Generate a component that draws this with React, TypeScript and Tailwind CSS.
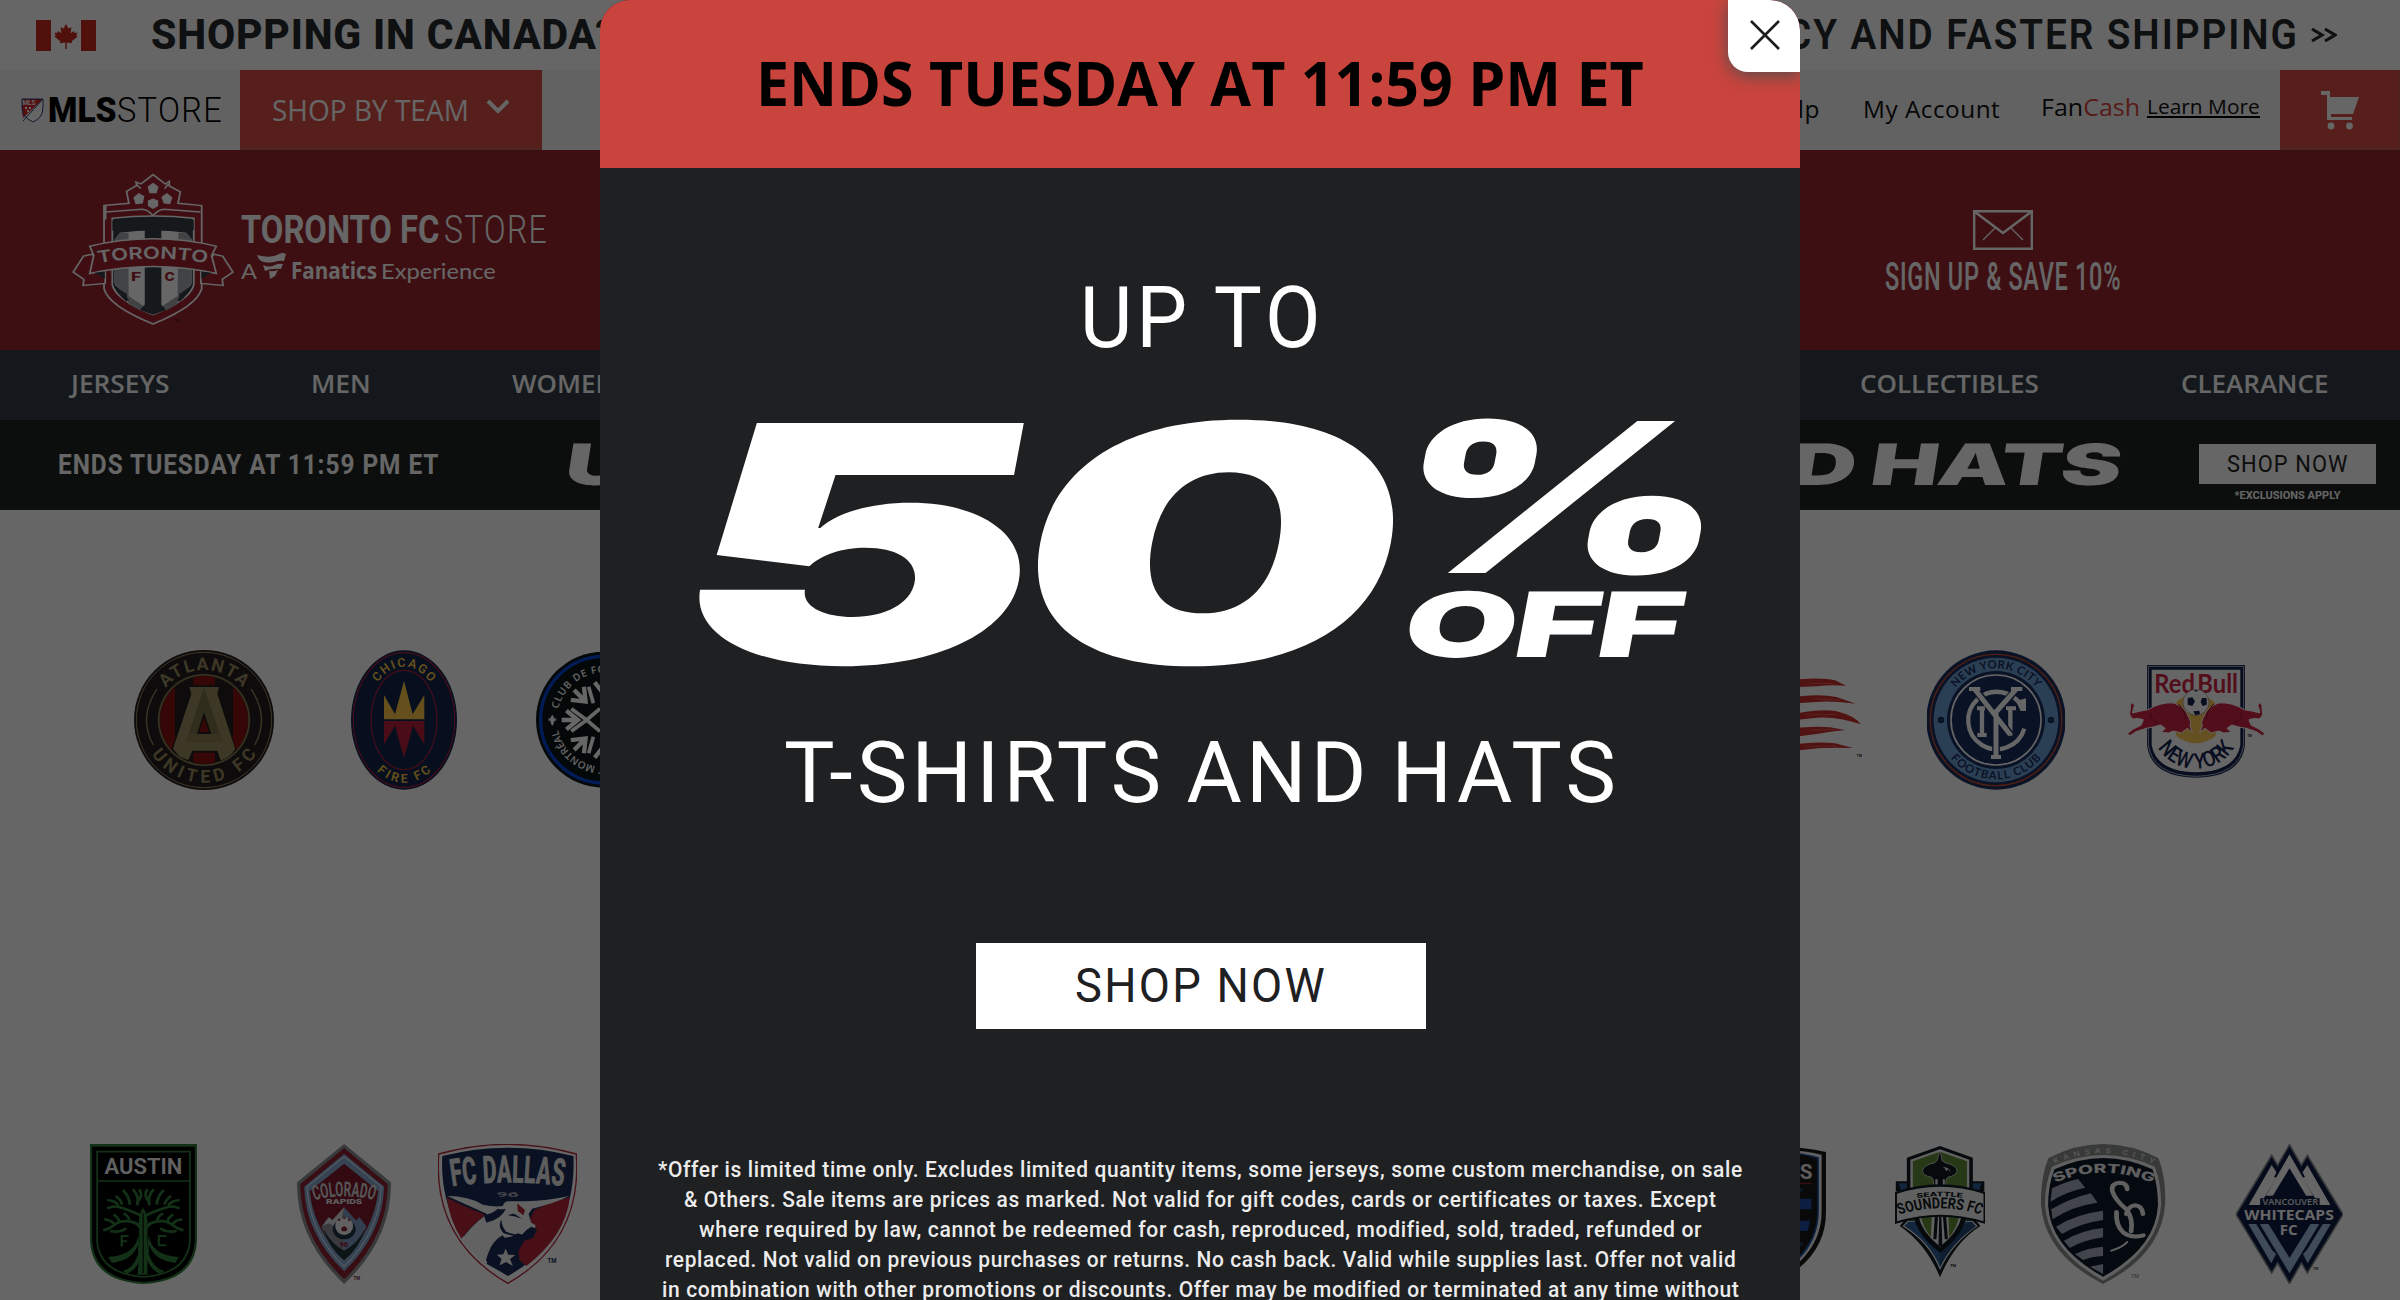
import React, { useLayoutEffect, useRef } from "react";

/* Single line of text stretched horizontally to the width of its box. */
function Fit({ className = "", slant = 0, children }: { className?: string; slant?: number; children: React.ReactNode }) {
  const outer = useRef<HTMLSpanElement>(null);
  const inner = useRef<HTMLSpanElement>(null);
  useLayoutEffect(() => {
    const o = outer.current;
    const i = inner.current;
    if (!o || !i) return;
    const k = o.clientWidth / i.offsetWidth;
    i.style.transform = `skewX(${-slant}deg) scaleX(${k})`;
  }, [slant]);
  return (
    <span ref={outer} className={"block shrink-0 whitespace-nowrap " + className}>
      <span ref={inner} className="inline-block origin-left">{children}</span>
    </span>
  );
}

type ArcProps = {
  id: string; cx: number; cy: number; rx: number; ry?: number; bottom?: boolean;
  size: number; fill: string; len: number; weight?: number; font?: string; stretch?: boolean; children: string;
};
function ArcText({ id, cx, cy, rx, ry = rx, bottom = false, size, fill, len, weight = 700, font = "Roboto", stretch = false, children }: ArcProps) {
  return (
    <>
      <path id={id} fill="none" d={`M${cx - rx} ${cy}A${rx} ${ry} 0 0 ${bottom ? 0 : 1} ${cx + rx} ${cy}`} />
      <text fontFamily={`${font}, sans-serif`} fontWeight={weight} fontSize={size} fill={fill} textAnchor="middle">
        <textPath href={"#" + id} startOffset="50%" textLength={len} lengthAdjust={stretch ? "spacingAndGlyphs" : "spacing"}>{children}</textPath>
      </text>
    </>
  );
}

type LabelProps = { x: number; y: number; size: number; w: number; fill: string; weight?: number; font?: string; transform?: string; children: string };
function Label({ x, y, size, w, fill, weight = 700, font = "Roboto", transform, children }: LabelProps) {
  return (
    <text x={x} y={y} textAnchor="middle" fontFamily={`${font}, sans-serif`} fontWeight={weight} fontSize={size} fill={fill} textLength={w} lengthAdjust="spacingAndGlyphs" transform={transform}>
      {children}
    </text>
  );
}

function Crest({ box, className, label, children }: { box: string; className: string; label: string; children: React.ReactNode }) {
  return (
    <svg viewBox={box} preserveAspectRatio="none" className={"block shrink-0 " + className} role="img" aria-label={label}>
      {children}
    </svg>
  );
}

function Atlanta() {
  const gold = "#988b5e";
  return (
    <Crest box="72 60 420 420" className="ml-[134px] h-[140px] w-[140px]" label="Atlanta United FC">
      <circle cx="282" cy="270" r="210" fill="#241d20" />
      <circle cx="282" cy="270" r="203" fill="none" stroke={gold} strokeWidth="3" />
      <clipPath id="atl"><circle cx="282" cy="270" r="132" /></clipPath>
      <circle cx="282" cy="270" r="139" fill="#625a3a" />
      <circle cx="282" cy="270" r="136" fill="none" stroke={gold} strokeWidth="3" />
      <g clipPath="url(#atl)">
        <rect x="140" y="130" width="290" height="280" fill="#241d20" />
        <path d="M140 130h55v280h-55zM250 130h65v35h-65zM250 368h65v40h-65zM369 130h60v280h-60z" fill="#8a0f0f" />
        <path d="M236 168h93l-5 24 56 172-18 24-33 10-13-34h-69l-11 34-30-8-22-30 60-170z" fill="#241d20" />
        <path d="M238 171h89l-5 21 54 166-19 22-24 12-11-30h-75l-12 28-26-10-20-24 55-164z" fill={gold} />
        <path d="M282 172l56 165H228z" fill="#7c7148" />
        <path d="M228 337h110l-12-26h-86z" fill={gold} opacity=".6" />
        <path d="M282 246l22 66h-43z" fill="#241d20" />
        <path d="M282 262l15 44h-29z" fill="#8a0f0f" />
      </g>
      <path d="M141 177Q84 262 130 345M423 177Q480 262 434 345" fill="none" stroke={gold} strokeWidth="4" />
      <ArcText id="atl-t" cx={282} cy={270} rx={150} size={53} fill={gold} len={262}>ATLANTA</ArcText>
      <ArcText id="atl-b" cx={282} cy={270} rx={188} bottom size={53} fill={gold} len={375}>UNITED FC</ArcText>
    </Crest>
  );
}

function Chicago() {
  return (
    <Crest box="723 60 318 420" className="ml-[77px] h-[140px] w-[106px]" label="Chicago Fire FC">
      <ellipse cx="882" cy="270" rx="159" ry="209" fill="#12264b" />
      <ellipse cx="882" cy="270" rx="152" ry="202" fill="none" stroke="#af2041" strokeWidth="3.5" />
      <ellipse cx="882" cy="270" rx="99" ry="149" fill="none" stroke="#af2041" strokeWidth="3.5" />
      <path d="M822 195l33 58 27-100 26 100 35-58v73H822z" fill="#fdc84a" />
      <path d="M822 273h121v70l-34-56-27 97-27-97-33 56z" fill="#b9213c" />
      <ArcText id="chi-t" cx={882} cy={270} rx={110} ry={160} size={37} fill="#fdc84a" len={190} weight={600}>CHICAGO</ArcText>
      <ArcText id="chi-b" cx={882} cy={270} rx={140} ry={188} bottom size={37} fill="#fdc84a" len={182} weight={600}>FIRE FC</ArcText>
    </Crest>
  );
}

function Montreal() {
  return (
    <Crest box="1278 60 408 420" className="ml-[79px] h-[140px] w-[136px]" label="CF Montréal">
      <circle cx="1482" cy="269" r="204" fill="#0c1418" />
      <circle cx="1482" cy="269" r="190" fill="none" stroke="#0044d8" strokeWidth="10" />
      <g fill="none" stroke="#fff" strokeWidth="13">
        {[0, 45, 90, 135, 180, 225, 270, 315].map((a) => (
          <g key={a} transform={`rotate(${a} 1482 270)`}>
            <path d="M1355 270h48M1369 242l35 28-35 28" />
          </g>
        ))}
        <path d="M1384 236l46 34-46 34M1450 220l-14-50M1450 320l-14 50M1430 270l40-34M1430 270l40 34" strokeWidth="11" />
      </g>
      <path d="M1327 256q10 12 0 30q-10-18 0-30M1314 270h26M1317 264q4 10 10 10M1337 264q-4 10-10 10" fill="#fff" stroke="#fff" strokeWidth="3" />
      <path id="mtl" fill="none" d="M1341 269a141 141 0 1 1 0 .1" />
      <text fontFamily="Open Sans, sans-serif" fontWeight="600" fontSize="30" fill="#fff">
        <textPath href="#mtl" startOffset="32" textLength="262">CLUB DE FOOTB</textPath>
      </text>
      <text fontFamily="Open Sans, sans-serif" fontWeight="600" fontSize="30" fill="#fff">
        <textPath href="#mtl" startOffset="664" textLength="190">T MONTRÉAL</textPath>
      </text>
    </Crest>
  );
}

function NewEngland() {
  return (
    <Crest box="0 60 246 420" className="ml-[1108px] h-[140px] w-[82px]" label="New England Revolution">
      <g fill="#c9302e">
        <path d="M0 155Q110 138 165 151L199 167Q150 164 110 169L0 173z" />
        <path d="M0 207Q110 188 170 201L227 221Q150 212 110 216L0 223z" />
        <path d="M0 262Q110 232 170 244Q225 258 243 283Q170 258 110 263L0 275z" />
        <path d="M0 300Q100 286 150 292L195 300Q150 305 110 312L0 326z" />
        <path d="M0 348Q110 332 165 340L219 354Q140 352 100 356L0 367z" />
      </g>
      <g fill="none" stroke="#ff9d98" strokeWidth="2" opacity=".55">
        <path d="M90 160l70 1M100 205l80 6M80 255l90-2M90 300l80-2M80 350l90-3" />
      </g>
      <Label x={238} y={381} size={13} w={15} fill="#111827">TM</Label>
    </Crest>
  );
}

function NewYorkCity() {
  const navy = "#1a2d5e";
  return (
    <Crest box="441 60 414 420" className="ml-[65px] h-[140px] w-[138px]" label="New York City FC">
      <circle cx="648" cy="270" r="209" fill={navy} />
      <circle cx="648" cy="270" r="197" fill="none" stroke="#c9502e" strokeWidth="4" />
      <circle cx="648" cy="270" r="187" fill="#6a9fd0" />
      <circle cx="648" cy="270" r="147" fill={navy} />
      <circle cx="648" cy="270" r="135" fill="none" stroke="#fff" strokeWidth="5" />
      <path d="M727 232A86 86 0 1 0 733 296" fill="none" stroke="#fff" strokeWidth="13" />
      <path d="M738 205v38h-16l-14-30z" fill="#fff" />
      <g fill="none" stroke="#fff" strokeWidth="15">
        <path d="M606 233v84M691 233v84" strokeWidth="13" />
        <path d="M585 178l106 136M708 178l-60 72M648 240v142" stroke={navy} strokeWidth="23" />
        <path d="M583 176l108 138M708 178l-60 68M648 240v140" />
        <path d="M567 177h34M693 177h34M633 381h30M591 235h24M678 235h30M592 315h28" strokeWidth="12" />
      </g>
      <circle cx="483" cy="270" r="10" fill={navy} />
      <circle cx="813" cy="270" r="10" fill={navy} />
      <ArcText id="nyc-t" cx={648} cy={270} rx={155} size={34} fill={navy} len={278} weight={700} font="Lato">NEW YORK CITY</ArcText>
      <ArcText id="nyc-b" cx={648} cy={270} rx={178} bottom size={34} fill={navy} len={310} weight={700} font="Lato">FOOTBALL CLUB</ArcText>
    </Crest>
  );
}

function RedBull() {
  const red = "#cf2544";
  const bull = "M1052 217l12 8q-6 14-6 24q20-6 46-10q40-24 78-20q34 14 42 38q12 20 6 30l8 20-16-12-18 14-24-6-14 6-22-2 12-12-14-10q-26 8-44 10l-30 10-18 12-8-6 18-14 24-12 6-16q-16-6-30-2q-14-8-10-24q2-18 2-28z";
  return (
    <Crest box="1041 60 414 420" className="ml-[62px] h-[140px] w-[138px]" label="New York Red Bulls">
      <path d="M1101 105h294v240q-12 96-147 98q-135-2-147-98z" fill="#14244f" />
      <path d="M1105 109h286v235q-12 92-143 95q-131-3-143-95z" fill="none" stroke="#fff" strokeWidth="2" />
      <path d="M1115 119h266v226q-14 80-133 82q-119-2-133-82z" fill="#fff" />
      <path d="M1180 225q68-70 130 0l-4 60q10 30-8 40q-50 30-100 0q-18-10-8-40z" fill="#fbc750" />
      <Label x={1184} y={189} size={82} w={122} fill={red} font="Lato" weight={700}>Red</Label>
      <Label x={1313} y={189} size={82} w={122} fill={red} font="Lato" weight={700}>Bull</Label>
      <circle cx="1248" cy="217" r="39" fill="#fff" stroke="#777" strokeWidth="1.5" />
      <path d="M1223 204l14-2 8 12-8 14-14-4zM1266 204l14 0v20l-12 4-6-12zM1241 181h14l-7 5zM1240 244l18-2 2 10-14 4z" fill="#14244f" />
      <path d={bull} fill={red} stroke="#fff" strokeWidth="3" />
      <path d={bull} transform="translate(2497 0) scale(-1 1)" fill={red} stroke="#fff" strokeWidth="3" />
      <path d="M1196 222q20 20 22 46M1301 222q-20 20-22 46M1110 250q0 20 24 28M1387 250q0 20-24 28" fill="none" stroke="#8d1027" strokeWidth="3" />
      <ArcText id="rb-b" cx={1248} cy={290} rx={132} ry={126} bottom size={66} fill="#14244f" len={272} weight={500} stretch>NEW YORK</ArcText>
      <Label x={1409} y={322} size={10} w={13} fill="#111827">TM</Label>
    </Crest>
  );
}

function Austin() {
  const green = "#2f7a3a";
  const side = (
    <g fill="none" stroke={green} strokeWidth="8">
      <path d="M229 345q0-34-30-40q-30-6-50 12q-12 10-28 14M132 265q20-10 40-2q40 14 58 26M140 333q30 6 46-8M124 298q22 2 30 18M150 283q14 10 16 22M178 280q14 8 16 20M156 228q14 10 18 26M176 210q18 18 20 44M204 208q20 20 12 48M132 240q22 2 32 16M222 208q14 20-8 40" />
    </g>
  );
  return (
    <Crest box="84 72 300 420" className="ml-[90px] h-[140px] w-[107px]" label="Austin FC">
      <path d="M84 72h300v290q-6 122-150 130q-144-8-150-130z" fill={green} />
      <path d="M90 80h288v284q-8 114-144 122q-136-8-144-122z" fill="#000" />
      <path d="M104 95h260v270q-8 96-130 106q-122-10-130-106z" fill="none" stroke={green} strokeWidth="5" />
      <path d="M104 183h260" stroke={green} strokeWidth="5" />
      <Label x={234} y={163} size={65} w={218} fill="#f2f2f2" weight={600}>AUSTIN</Label>
      {side}
      <g transform="translate(467 0) scale(-1 1)">{side}</g>
      <path d="M221 300q4-30 12-36q14 20 12 50v150h-28q8-60 4-164z" fill={green} />
      <path d="M219 345q-6 60-84 66l10 18q60-8 74-56v30q-14 44-44 50l14 8q28-14 38-50zM249 345q6 60 84 66l-10 18q-60-8-74-56v30q14 44 44 50l-14 8q-28-14-38-50z" fill={green} />
      <path d="M233 280v180" stroke="#000" strokeWidth="3" />
      <path d="M192 348h-19v32M173 364h15M298 348h-21v28h21" fill="none" stroke={green} strokeWidth="6" />
    </Crest>
  );
}

function Colorado() {
  return (
    <Crest box="664 72 263 420" className="ml-[100px] h-[140px] w-[94px]" label="Colorado Rapids">
      <path d="M796 72l131 115q2 170-131 305Q662 357 664 187z" fill="#8d8f92" />
      <path d="M796 84l122 108q0 160-122 286Q673 352 673 192z" fill="#8c2233" />
      <path d="M796 102l112 98q-4 140-112 254Q687 340 684 200z" fill="#86a9cf" />
      <path d="M796 110l104 90q-6 136-104 240Q698 336 692 200z" fill="none" stroke="#dbe6f2" strokeWidth="3" />
      <path d="M796 131l95 82q-10 112-95 206Q708 325 700 213z" fill="#7f1a2b" />
      <path d="M796 262l33 40 10-10 19 28q-20 56-62 100q-42-46-64-100l20-28 12 12z" fill="#8d9299" />
      <path d="M796 262l33 40 10-10 19 28q-20 50-62 80z" fill="#7f9cc4" />
      <path d="M735 318l18-26 10 8 33-38-10 44-10-4-8 16-14-8z" fill="#dcdfe4" />
      <path d="M738 326q20 44 58 66q38-22 58-66q-14 56-58 95q-44-38-58-95z" fill="#203236" />
      <ellipse cx="796" cy="328" rx="32" ry="30" fill="#223245" />
      <ellipse cx="796" cy="318" rx="25" ry="27" fill="#f2f2f2" />
      <path d="M787 325l9-7 9 7-3 9h-12zM776 300l10-6-2 10zM816 300l-10-6 2 10zM790 292h12l-6 6z" fill="#8c2233" />
      <ArcText id="col" cx={796} cy={429} rx={250} ry={200} size={62} fill="#d5d5d8" len={170} stretch>COLORADO</ArcText>
      <Label x={796} y={251} size={19} w={101} fill="#e8e8e8" weight={900}>RAPIDS</Label>
      <Label x={795} y={381} size={19} w={24} fill="#8c2233" weight={900}>96</Label>
      <Label x={831} y={479} size={15} w={18} fill="#6b2b38">TM</Label>
    </Crest>
  );
}

function Dallas() {
  const navy = "#1a2b56";
  return (
    <Crest box="1059 72 390 420" className="ml-[47px] h-[140px] w-[139px]" label="FC Dallas">
      <path d="M1061 102q193-58 386 0q18 260-192 388Q1044 360 1061 102z" fill="#fff" stroke="#b52a3c" strokeWidth="4" />
      <path d="M1071 108q184-50 368 0q10 245-184 360Q1060 345 1071 108z" fill={navy} />
      <path d="M1083 232q40 24 112 54-40 24-70 70-32-50-42-124zM1429 232q-40 10-100 38l-12 30 18 30-14 26q-50 10-34 64l20 18q110-90 122-206z" fill="#b3263b" />
      <path d="M1085 228q60 0 100 26 32 8 56 4 2-14 18-14h46q60-2 122-16-40 22-104 38l-10 16 8 26 12 8-6 22-22 10-22-8-20 10q-60 8-72 84l-66-76q30-44 72-76z" fill="#f5f5f5" />
      <path d="M1187 284q24-2 40-18 10 4 22 0-10 30-54 42zM1196 432q2-60 44-86l10 12 58-8-22 40q-2 28 6 44l-38 32zM1237 298q-12 22 6 42l30 8 26 10 28-6 10-24-16-8-14 10-16 18-40-12q-14-16-14-38zM1256 286q14-10 24 0l14 10q-18-8-38-10z" fill={navy} />
      <path d="M1281 250l22 20-4 16-16-12z" fill="#b3263b" />
      <path d="M1249 386l7 18 20 1-15 12 8 21-19-12-18 10 5-20-13-12 18-1z" fill="#f2f2f2" />
      <path id="dal" fill="none" d="M1098 200Q1255 176 1412 200" />
      <text fontFamily="Roboto, sans-serif" fontWeight="900" fontSize="116" fill="#e8e8e8">
        <textPath href="#dal" startOffset="0" textLength="314" lengthAdjust="spacingAndGlyphs">FC DALLAS</textPath>
      </text>
      <Label x={1254} y={230} size={24} w={62} fill="#9da1b2" weight={900}>96</Label>
      <Label x={1379} y={429} size={20} w={25} fill={navy}>TM</Label>
    </Crest>
  );
}

function SanJose() {
  return (
    <Crest box="0 72 116 420" className="ml-[1202.5px] h-[140px] w-[46px]" label="San Jose Earthquakes">
      <path d="M0 78q60 4 116 18v180q0 100-66 166H0z" fill="#1b1719" />
      <path d="M0 88q60 4 105 16v170q0 90-58 154H0z" fill="#f1f1f1" />
      <path d="M0 92q60 6 98 20v160q0 84-50 146H0z" fill="#1f4fa5" />
      <path d="M0 96q60 6 94 20v156q0 80-50 142H0z" fill="#1b1719" />
      <path d="M0 190h80" stroke="#a32634" strokeWidth="3" />
      <path d="M0 236h79v32H0zM0 302h76l-6 31H0zM52 206h6l-6 14zM52 368h7l-7 12z" fill="#1f4fa5" />
      <Label x={66} y={178} size={62} w={32} fill="#e5e5e5">S</Label>
    </Crest>
  );
}

function Seattle() {
  const ink = "#101a22";
  return (
    <Crest box="291 72 229 420" className="ml-[69px] h-[140px] w-[90.5px]" label="Seattle Sounders FC">
      <path d="M293 184h46v30h-46zM517 184h-46v30h46z" fill={ink} />
      <path d="M300 190h30v20h-24zM510 190h-30v20h24z" fill="#2f6299" />
      <path d="M405 78l83 35v120H321V113z" fill={ink} />
      <path d="M405 88l74 31v100H330V119z" fill="#f2f2f2" />
      <path d="M405 95l68 29v90H336v-90z" fill="#5f8c36" />
      <path d="M403 98h4l3 24 8 6q30 8 30 26-4 14-24 18-6 6-4 32h-32q2-26-4-32-22-4-24-20 4-18 32-24l6-8z" fill={ink} stroke="#eee" strokeWidth="2" />
      <path d="M393 178h6v28h-6zM412 178h5v28h-5z" fill="#e8e8e8" />
      <path d="M412 140q18 2 20 18l-6-10-6 6-2-8z" fill="#e8e8e8" />
      <path d="M303 318l14-20h176l14 20q-66 50-102 154Q370 372 303 318z" fill={ink} />
      <path d="M312 318l12-14h162l12 14q-62 50-93 128Q378 366 312 318z" fill="#2f6299" stroke="#f2f2f2" strokeWidth="3" />
      <path d="M405 340v100q28-70 90-120l-10-14z" fill="#234a75" />
      <path d="M338 288h134q-10 60-67 110q-57-50-67-110z" fill={ink} />
      <path d="M350 288h110q-10 50-55 92q-45-42-55-92z" fill="#f2f2f2" />
      <path d="M356 286h28l-2 66q-20-28-26-66zM426 286h28q-6 38-26 66z" fill="#5f8c36" />
      <path d="M392 284h8l-4 74h-8zM403 284h5l3 94h-10zM412 284h8l5 74h-8z" fill={ink} />
      <path d="M291 216q114-46 229 0v96q-114-44-229 0z" fill={ink} />
      <path d="M296 221q109-42 219 0v83q-109-40-219 0z" fill="#f3f3f3" />
      <path id="sea" fill="none" d="M302 284Q405 246 510 284" />
      <text fontFamily="Roboto, sans-serif" fontWeight="700" fontSize="46" fill={ink}>
        <textPath href="#sea" textLength="210" lengthAdjust="spacingAndGlyphs">SOUNDERS FC</textPath>
      </text>
      <path id="sea2" fill="none" d="M346 234Q405 224 464 234" />
      <text fontFamily="Roboto, sans-serif" fontWeight="900" fontSize="19" fill={ink}>
        <textPath href="#sea2" textLength="116" lengthAdjust="spacingAndGlyphs">SEATTLE</textPath>
      </text>
      <Label x={438} y={440} size={13} w={15} fill="#223">TM</Label>
    </Crest>
  );
}

function Sporting() {
  return (
    <Crest box="662 72 315 420" className="ml-[56px] h-[140px] w-[124.5px]" label="Sporting Kansas City">
      <path d="M681 114q138-84 278 0q20 60 17 140-10 150-157 238Q672 404 662 254q-2-80 19-140z" fill="#8d918f" />
      <path d="M690 140q130-70 260 0 16 50 16 114-8 136-147 228Q680 390 672 254q0-64 18-114z" fill="#f0f0f0" />
      <path d="M696 148q124-68 248 0 14 50 14 108-6 128-139 214Q686 384 680 256q0-60 16-108z" fill="#0d1a2b" />
      <g fill="#a5afbf">
        <path d="M690 205q30-18 66-28l18 26q-50 12-88 42zM688 268q50-34 100-48l17 28q-64 10-114 50zM700 320q50-38 119-48v28q-60 10-104 42zM720 362q46-32 99-38v28q-50 8-84 32zM748 402q30-18 71-22v28q-30 2-50 12zM786 440l33-8v30z" />
      </g>
      <g fill="none" stroke="#f0f0f0" strokeWidth="12" strokeLinecap="round">
        <path d="M880 208q0-20-20-20-20 2-18 24 6 26 36 56 18 30 12 66" />
        <path d="M920 282q-2-26-22-26-16 4-20 26M853 276q-2 40 16 60 20 20 52 10" />
        <path d="M880 366q-12 16-40 26" strokeWidth="6" />
      </g>
      <path id="skc" fill="none" d="M698 188Q819 128 943 188" />
      <text fontFamily="Inter, sans-serif" fontWeight="800" fontSize="37" fill="#f0f0f0">
        <textPath href="#skc" textLength="256" lengthAdjust="spacingAndGlyphs">SPORTING</textPath>
      </text>
      <path id="skc2" fill="none" d="M697 131Q819 68 944 131" />
      <text fontFamily="Inter, sans-serif" fontWeight="600" fontSize="21" fill="#d8d8d8">
        <textPath href="#skc2" textLength="260">KANSAS CITY</textPath>
      </text>
      <Label x={900} y={475} size={18} w={20} fill="#8d918f" weight={500}>TM</Label>
    </Crest>
  );
}

function Vancouver() {
  return (
    <Crest box="1155 72 270 420" className="ml-[70.5px] h-[140px] w-[107px]" label="Vancouver Whitecaps FC">
      <path d="M1290 74l30 62 15-30 90 177-90 176-15-30-30 62-30-62-15 30-90-176 90-177 15 30z" fill="#0f1c45" stroke="#85898f" strokeWidth="4" />
      <g fill="#fff">
        <path d="M1290 103l60 124h-18l-42-82-42 82h-18z" />
        <path d="M1245 135l12 22-6 14 6 2-42 82h-28zM1335 135l-12 22 6 14-6 2 42 82h28z" />
      </g>
      <path d="M1216 235h150v26h-150z" fill="#0f1c45" />
      <g fill="#9dbbdc">
        <path d="M1290 460l-75-148h22l53 102 53-102h22z" />
        <path d="M1186 312h20l40 78 10 12-12 28zM1394 312h-20l-40 78-10 12 12 28z" />
      </g>
      <Label x={1292} y={255} size={28} w={140} fill="#e8e8e8" weight={600} font="Open Sans">VANCOUVER</Label>
      <Label x={1289} y={299} size={45} w={226} fill="#fff" font="Open Sans">WHITECAPS</Label>
      <Label x={1288} y={345} size={45} w={45} fill="#fff" font="Open Sans">FC</Label>
      <Label x={1356} y={451} size={11} w={13} fill="#333">TM</Label>
    </Crest>
  );
}

function TorontoCrest() {
  const red = "#a0242e";
  const navy = "#353f47";
  return (
    <Crest box="183 520 411 460" className="h-[153px] w-[162.5px]" label="Toronto FC crest">
      <g stroke="#fff" strokeWidth="4.5" fill={red}>
        <path d="M264 618l63-7-6-36 26-18-2-10 12 6q16-14 31-28 15 14 31 28l10-8v14l28 18-6 34 60 7v250q-12 52-123 106Q276 920 264 868z" />
        <path d="M268 637l92-8q14 0 28 19 14-19 28-19l92 8M268 660V618" fill="none" />
        <path d="M345 553l12 14M427 553l-10 14" />
      </g>
      <path d="M285 656q103-14 206 0v200q-8 44-103 90-95-46-103-90z" fill={navy} stroke="#fff" strokeWidth="4.5" />
      <path d="M292 720l12-20q84-14 168 0l14 20v130q-8 40-98 86-88-46-98-86z" fill="#fff" />
      <path d="M304 700h22v200l-36-50V720zM452 700h20l14 20v130l-36 50zM326 890l38 30-8 14-30-20zM450 890l-38 30 8 14 30-20z" fill="#a3a7aa" />
      <path d="M285 662q103-14 206 0v30q-24-4-82-6v230l12 16-33 14-33-14 12-16V686q-50 2-82 8z" fill={navy} />
      <path d="M286 850q10 34 36 58v-24q-16-10-36-34zM490 850q-10 34-36 58v-24q16-10 36-34z" fill={navy} />
      <path d="M388 549l14 12-5 20h-18l-5-20zM352 580l14 10-4 22-18 2-6-20zM423 580l14 14-6 20-16-2-6-20zM388 597l13 6v16l-13 9-13-9v-16z" fill="#fff" />
      <g fill={red} stroke="#fff" strokeWidth="4.5">
        <path d="M234 764l-22 6-26 48 27 22-2 18 56-6v-34zM542 764l22 6 26 48-27 22 2 18-56-6v-34z" />
        <path d="M228 740q160-44 320 0l-12 28 12 54q-160-42-320 0l10-54z" />
      </g>
      <path d="M240 820l26-4v22zM536 820l-26-4v22z" fill={navy} />
      <path id="tor" fill="none" d="M250 791Q388 764 525 791" />
      <text fontFamily="Inter, sans-serif" fontWeight="600" fontSize="50" fill="#fff">
        <textPath href="#tor" textLength="276" lengthAdjust="spacingAndGlyphs">TORONTO</textPath>
      </text>
      <Label x={345} y={846} size={34} w={26} fill={red} weight={800} font="Inter">F</Label>
      <Label x={430} y={846} size={34} w={26} fill={red} weight={800} font="Inter">C</Label>
      <Label x={447} y={967} size={9} w={14} fill="#4d1015">TM</Label>
    </Crest>
  );
}

function TopBanner() {
  return (
    <div className="flex h-[70px] items-center bg-white font-['Roboto',sans-serif] text-[42px] leading-none text-[#26282b]">
      <svg viewBox="0 0 60 31" className="ml-9 h-[31px] w-[60px]">
        <path d="M0 0h15v31H0zM45 0h15v31H45z" fill="#c9281c" />
        <path d="M30 4l2.5 4.500 3-1.300-.9 6 3.400-2.300.7 2 2.800-.5-1.200 3 1.400 1.200-6 4.600.6 2-5.600-.7V29h-1.400v-6.500l-5.600.7.6-2-6-4.600 1.400-1.200-1.200-3 2.800.5.7-2 3.400 2.300-.9-6 3 1.300z" fill="#c9281c" />
      </svg>
      <Fit className="ml-[55px] w-[466px] font-extrabold tracking-[0.02em]">SHOPPING IN CANADA?</Fit>
      <Fit className="ml-[1169px] w-[513px] font-semibold tracking-[0.05em]">CY AND FASTER SHIPPING</Fit>
      <svg viewBox="0 0 26 16" className="ml-[12px] h-4 w-[26px]">
        <path d="M1 2l10 6-10 6M14 2l10 6-10 6" fill="none" stroke="#26282b" strokeWidth="3.200" />
      </svg>
    </div>
  );
}

function UtilityBar() {
  return (
    <div className="flex h-20 items-stretch bg-[#f6f6f6] leading-none text-black">
      <div className="flex w-60 shrink-0 items-center pl-[21px] font-['Roboto',sans-serif] text-[35px]">
        <svg viewBox="0 0 24 25" className="h-[25px] w-[24px]">
          <path d="M1 1h21v8q0 11-10 15Q1 19 1 10z" fill="#fff" />
          <path d="M1 1h21L2 20Q1 15 1 10z" fill="#d6282f" />
          <path d="M1 1h21v8q0 11-10 15Q1 19 1 10zM2 23L22 1" fill="none" stroke="#26407a" />
          <path d="M4 10h2M8 10h2M6 13h2" stroke="#fff" strokeWidth="2" />
          <Label x={8} y={6.5} size={7} w={13} fill="#fff">MLS</Label>
        </svg>
        <Fit className="ml-[3px] w-[69px] font-black">MLS</Fit>
        <Fit className="w-[106px] font-light tracking-[0.04em]">STORE</Fit>
      </div>
      <div className="flex w-[302px] shrink-0 items-center border-b-2 border-[#bb5f58] bg-[#d64f47] pl-[32px] font-['Open_Sans',sans-serif] text-[29px] text-white">
        <Fit className="w-[197px]">SHOP BY TEAM</Fit>
        <svg viewBox="0 0 24 16" className="-mt-1 ml-[17px] h-4 w-6">
          <path d="M2 2l10 10L22 2" fill="none" stroke="#fff" strokeWidth="4" />
        </svg>
      </div>
      <div className="ml-auto flex items-start pt-[27px] font-['Open_Sans',sans-serif] text-2xl leading-6 text-[#111]">
        <Fit className="w-[55px] tracking-[0.02em]">Help</Fit>
        <Fit className="ml-[43px] w-[137px] tracking-[0.02em]">My Account</Fit>
        <div className="ml-[41px] -mt-0.5 flex">
          <Fit className="w-[99px]">Fan<span className="text-[#d8453e]">Cash</span></Fit>
          <Fit className="ml-[7px] h-[23px] w-[113px] border-b-2 border-black text-[20px] leading-6">Learn More</Fit>
        </div>
      </div>
      <div className="ml-5 flex w-[120px] items-center justify-center border-b-2 border-r border-[#bb5f58] bg-[#d64f47]">
        <svg viewBox="0 0 38 39" className="mt-0.5 h-[39px] w-[38px]">
          <path d="M0 0h9v6h29l-6 17H10v3h21v3H6V4H0z" fill="#fff" />
          <circle cx="10" cy="35" r="3.400" fill="#fff" />
          <circle cx="28.500" cy="35" r="3.400" fill="#fff" />
        </svg>
      </div>
    </div>
  );
}

function StoreHeader() {
  return (
    <div className="flex h-[200px] items-start bg-[#9b262e] leading-none text-white">
      <div className="ml-[72px] mt-[23px]"><TorontoCrest /></div>
      <div className="ml-[6px] mt-[61px]">
        <div className="flex font-['Roboto',sans-serif] text-[38px]">
          <Fit className="w-[198px] font-bold">TORONTO FC</Fit>
          <Fit className="ml-[5px] w-[104px] font-light tracking-[0.04em]">STORE</Fit>
        </div>
        <div className="mt-[6px] flex items-start text-[22px]">
          <Fit className="mt-[5px] w-4 font-['Lato',sans-serif]">A</Fit>
          <svg viewBox="0 0 30 26" className="-mt-0.5 h-[26px] w-[30px]">
            <path d="M0 2q14 4 22-1 4-2 7 0l-2 7q-4-1-10 1Q6 11 2 6zM6 12q6 3 12 0 4-2 8-1l-2 5q-10-1-16 2zM12 18q4 1 9-1l-3 6-5 3z" fill="#fff" />
          </svg>
          <Fit className="ml-[4px] mt-[3px] w-[86px] font-['Open_Sans',sans-serif] text-[24px] font-bold">Fanatics</Fit>
          <Fit className="ml-[4px] mt-[5px] w-[115px] font-['Lato',sans-serif]">Experience</Fit>
        </div>
      </div>
      <div className="ml-[1337px] mt-[60px] flex w-[236px] flex-col items-center">
        <svg viewBox="0 0 60 40" className="h-10 w-[60px]" fill="none" stroke="#fff">
          <path d="M1.200 1.200h57.600v37.600H1.200z" strokeWidth="2.400" />
          <path d="M2 2l28 21L58 2" strokeWidth="2.400" />
          <path d="M22 18L10 30M38 18l12 12" strokeWidth="1.300" />
        </svg>
        <Fit className="mt-[8px] w-[236px] font-['Roboto',sans-serif] text-[38px] font-medium tracking-[0.03em]">SIGN UP &amp; SAVE 10%</Fit>
      </div>
    </div>
  );
}

function MainNav() {
  return (
    <nav className="flex h-[70px] items-center bg-[#343e46] pb-1 font-['Open_Sans',sans-serif] text-[26px] font-semibold leading-none text-white">
      <Fit className="ml-[71px] w-[98px]">JERSEYS</Fit>
      <Fit className="ml-[142px] w-[60px]">MEN</Fit>
      <Fit className="ml-[141px] w-[104px]">WOMEN</Fit>
      <Fit className="ml-[1244px] w-[179px]">COLLECTIBLES</Fit>
      <Fit className="ml-[142px] w-[147px]">CLEARANCE</Fit>
    </nav>
  );
}

function PromoStrip() {
  return (
    <div className="flex h-[90px] items-start bg-[#1e2321] font-['Roboto',sans-serif] text-white">
      <Fit className="ml-[58px] mt-[35px] w-[381px] text-[27px] font-bold leading-5 tracking-[0.04em]">ENDS TUESDAY AT 11:59 PM ET</Fit>
      <Fit slant={9} className="ml-[127px] mt-[24px] w-[64px] font-['Inter',sans-serif] text-[57px] font-black leading-[41px]">U</Fit>
      <Fit slant={9} className="ml-[1161px] mt-[24px] w-[330px] font-['Inter',sans-serif] text-[57px] font-black leading-[41px] tracking-[-0.02em]">D HATS</Fit>
      <div className="ml-auto mr-6 mt-6 flex w-[177px] flex-col items-center">
        <div className="flex h-10 w-full items-center justify-center bg-white text-[#1e2321]">
          <Fit className="w-[122px] text-[24px] leading-none tracking-[0.05em]">SHOP NOW</Fit>
        </div>
        <Fit className="mt-[7px] w-[106px] text-[11px] font-bold leading-[10px]">*EXCLUSIONS APPLY</Fit>
      </div>
    </div>
  );
}

function OfferDialog() {
  return (
    <div className="absolute left-[600px] top-0 flex h-[1300px] w-[1200px] flex-col items-center overflow-hidden rounded-t-[30px] bg-[#1f2022] font-['Roboto',sans-serif] text-white">
      <div className="flex h-[168px] w-full shrink-0 justify-center bg-[#c9443d] pt-[63px] font-['Open_Sans',sans-serif] text-[60px] font-bold leading-[40px] text-black">
        <Fit className="w-[888px]">ENDS TUESDAY AT 11:59 PM ET</Fit>
      </div>
      <button className="absolute right-0 top-0 flex h-[72px] w-[72px] items-center justify-center rounded-bl-[20px] rounded-tr-[30px] bg-white shadow-[0_4px_16px_rgba(60,80,80,0.8)]" aria-label="Close">
        <svg viewBox="0 0 30 30" className="mt-[-2px] ml-[2px] h-[30px] w-[30px]">
          <path d="M1 1l28 28M29 1L1 29" stroke="#1c1c1c" strokeWidth="2.600" />
        </svg>
      </button>
      <Fit className="ml-1 mt-[119px] w-[244px] text-[86px] leading-[62px] tracking-[0.05em]">UP TO</Fit>
      <div className="mt-[73px] flex h-[243px] w-full shrink-0 pl-[81px] font-['Inter',sans-serif] font-black">
        <Fit slant={10.6} className="w-[706px] text-[330px] leading-[243px] tracking-[-0.042em]">50</Fit>
        <div className="-mt-0.5">
          <Fit slant={10.6} className="ml-[7px] w-[336px] text-[209px] leading-[155px]">%</Fit>
          <Fit slant={10.6} className="ml-[18px] mt-[17px] w-[277px] text-[90px] leading-[66px] tracking-[-0.02em]">OFF</Fit>
        </div>
      </div>
      <Fit className="ml-1 mt-[77px] w-[836px] text-[86px] leading-[62px] tracking-[0.05em] [word-spacing:-0.05em]">T-SHIRTS AND HATS</Fit>
      <button className="ml-0.5 mt-[139px] flex h-[86px] w-[450px] shrink-0 items-center justify-center bg-white text-[#1f2022]">
        <Fit className="w-[252px] text-[48px] leading-none tracking-[0.05em]">SHOP NOW</Fit>
      </button>
      <div className="mt-[126px] flex flex-col items-center text-[21.5px] font-medium leading-[30px] text-[#ececec] tracking-[0.03em]">
        <Fit className="w-[1085px]">*Offer is limited time only. Excludes limited quantity items, some jerseys, some custom merchandise, on sale</Fit>
        <Fit className="w-[1033px]">&amp; Others. Sale items are prices as marked. Not valid for gift codes, cards or certificates or taxes. Except</Fit>
        <Fit className="w-[1003px]">where required by law, cannot be redeemed for cash, reproduced, modified, sold, traded, refunded or</Fit>
        <Fit className="w-[1071px]">replaced. Not valid on previous purchases or returns. No cash back. Valid while supplies last. Offer not valid</Fit>
        <Fit className="w-[1077px]">in combination with other promotions or discounts. Offer may be modified or terminated at any time without</Fit>
      </div>
    </div>
  );
}

export default function App() {
  return (
    <div className="relative h-[1300px] w-[2400px] overflow-hidden bg-white">
      <TopBanner />
      <UtilityBar />
      <StoreHeader />
      <MainNav />
      <PromoStrip />
      <main className="pt-[140px]">
        <div className="flex"><Atlanta /><Chicago /><Montreal /><NewEngland /><NewYorkCity /><RedBull /></div>
        <div className="mt-[354px] flex"><Austin /><Colorado /><Dallas /><SanJose /><Seattle /><Sporting /><Vancouver /></div>
      </main>
      <div className="absolute inset-0 bg-black/60" />
      <OfferDialog />
    </div>
  );
}
